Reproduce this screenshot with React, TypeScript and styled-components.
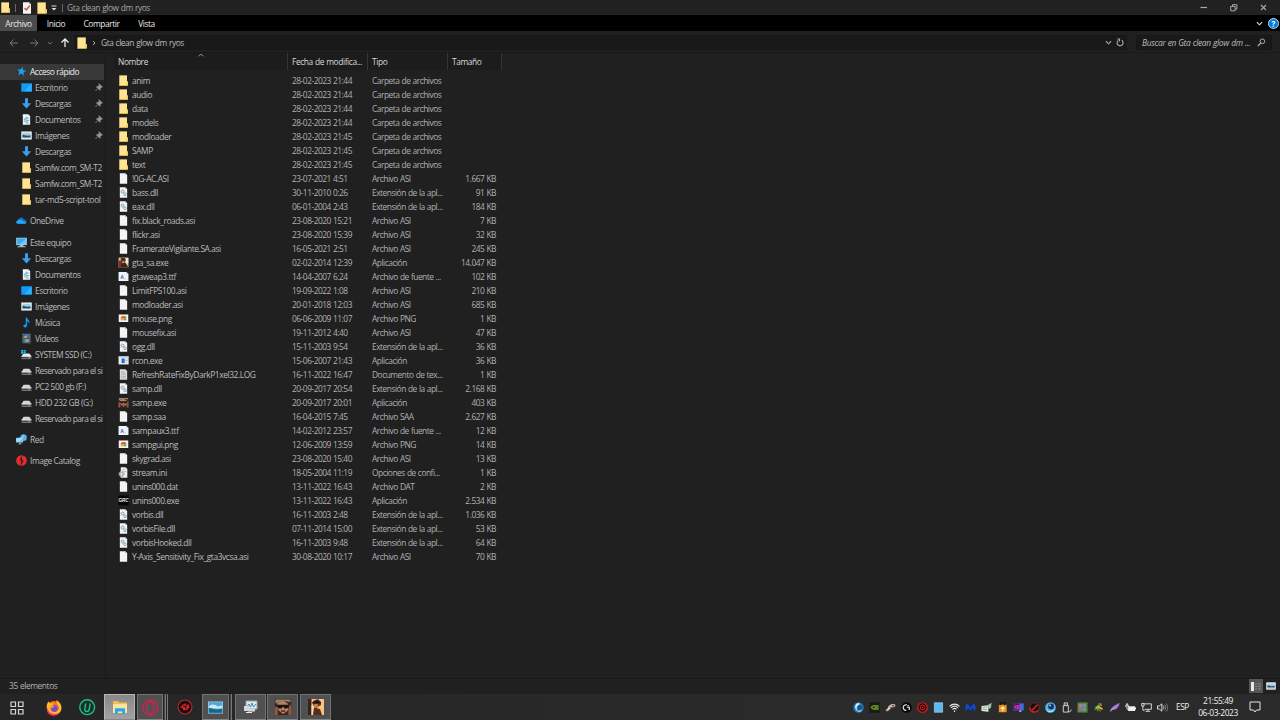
import React from 'react';
import styled, { createGlobalStyle, css } from 'styled-components';

const GlobalStyle = createGlobalStyle`
    * {
        box-sizing: border-box;
    }
    body {
        margin: 0;
        background: #202020;
        overflow: hidden;
    }
    svg {
        display: block;
        flex: none;
    }
`

/**
 * ICONS
 */

type IconName =
    | 'folder' | 'file' | 'dll' | 'font' | 'png' | 'log' | 'ini' | 'app'
    | 'gta' | 'samp' | 'grc' | 'star' | 'desktop' | 'down' | 'doc' | 'picture'
    | 'cloud' | 'pc' | 'music' | 'video' | 'systemDrive' | 'drive' | 'network' | 'catalog';

const IconText = styled('text')`
    font-family: 'Liberation Sans', sans-serif;
    font-weight: 700;
    letter-spacing: 0;
`

const page = (
    <>
        <path d="M2 .3h6l2 2v9.4H2z" fill="#f4f4f4" />
        <path d="M8 .3v2h2z" fill="#a9a9a9" />
    </>
)

const icons: Record<IconName, React.ReactNode> = {
    folder: (
        <>
            <path d="M1.4.4h8.4v11.2H1.4z" fill="#ffe591" />
            <path d="M9.4 7.2h1.5v4.4H1.4v-.7h8z" fill="#e8bd4d" />
            <path d="M9.4 7.2h1.5v4H9.4z" fill="#f8d36a" />
        </>
    ),
    file: page,
    dll: (
        <>
            {page}
            <circle cx="5" cy="5" r="1.7" fill="#dce6ee" stroke="#8b9ba8" strokeWidth="1" />
            <circle cx="7.7" cy="8" r="1.5" fill="#dce6ee" stroke="#8ba5b8" strokeWidth="1" />
        </>
    ),
    font: (
        <>
            <path d="M.6 1h8.6l2.2 2v8H.6z" fill="#f2f4f8" />
            <path d="M9.2 1v2h2.2z" fill="#aaa" />
            <IconText x="2.4" y="9" fontSize="5.6" fill="#2b60c8">A</IconText>
            <path d="M7 9h2" stroke="#b7bec9" strokeWidth=".7" />
        </>
    ),
    png: (
        <>
            <path d="M.8 1.6h10.4v8.2H.8z" fill="#f4f4f4" />
            <path d="M3 5c1-2 4-2 6-1v2H3z" fill="#d9602e" />
            <path d="M3 6h2.5v2H3z" fill="#e6a33e" />
            <path d="M6 6h3v2H6z" fill="#69a34a" />
        </>
    ),
    log: (
        <>
            <path d="M2 .3h6l2 2v9.4H2z" fill="#dcdcdc" />
            <path d="M3.3 3h4M3.3 4.7h5.4M3.3 6.4h5.4M3.3 8.1h5.4M3.3 9.8h5.4" stroke="#999" strokeWidth=".6" />
        </>
    ),
    ini: (
        <>
            <path d="M3 .3h5.2l2 2v9.4H3z" fill="#eee" />
            <path d="M5 3h3M6 5h3" stroke="#aaa" strokeWidth=".7" />
            <circle cx="3.8" cy="7.7" r="2.6" fill="#bcc1c5" stroke="#a2a8ac" strokeWidth="1.4" strokeDasharray="1.2 .7" />
            <circle cx="3.8" cy="7.7" r=".9" fill="#f0f0f0" />
        </>
    ),
    app: (
        <>
            <path d="M.6 1.5h11v8.8h-11z" fill="#eee" />
            <path d="M.6 1.5h11v1.3h-11z" fill="#c5ccd3" />
            <path d="M3.9 3.8h3.4v5H3.9z" fill="#0878d4" />
            <path d="M8.3 4.3h2M8.3 6h2M8.3 7.7h1.3" stroke="#999" strokeWidth=".7" />
        </>
    ),
    gta: (
        <>
            <path d="M.6.6h10.8v10.8H.6z" fill="#d8c4a8" />
            <path d="M.6.6h4.4l1 4-2 6.8H.6z" fill="#713326" />
            <path d="M1 1h2v3H1z" fill="#e0b98c" />
            <path d="M4 1.5 7.4 1l1 2.2-1.2 3-2.5-1z" fill="#32201a" />
            <path d="m5 4 2 .2-.4 2.5-2.2-.2z" fill="#d98c57" />
            <path d="m4 7 4-1 3.4 5.4H3z" fill="#3f231c" />
            <path d="M8.8 1.2h2.4v5.6H8.4z" fill="#f5ead5" />
        </>
    ),
    samp: (
        <>
            <path d="M.5.6h11v10.8H.5z" fill="#3e2620" />
            <path d="M.5 6h2v5.4h-2zM9.6 5h1.9v6.4H9.6z" fill="#8a5a44" />
            <path d="M2 3.5 6 1.7 9.6 4l-.4 4.5L6 10.7 3 8.2z" fill="#b88065" />
            <path d="M2 4.5h8v1.6L8.5 7H7L6 5.7 5 7H3.3l-.9-.9z" fill="#191312" />
            <path d="M4.7 8.2h2.8v1H4.7z" fill="#532720" />
            <path d="M1 1h10v1.6L6 2 1 3.7z" fill="#8b8669" />
        </>
    ),
    grc: (
        <>
            <path d="M.3.6h11.4v10.8H.3z" fill="#050505" />
            <IconText x="6" y="7.9" fontSize="5" fontStyle="italic" textAnchor="middle" fill="#ececec">GRC</IconText>
        </>
    ),
    star: <path d="m7.6.8.5 3.4 3.3.7-3 1.8.4 3.8-2.6-2.5-3.6 1.5 1.5-3.6L1.5 3.6l3.8-.1z" fill="#1ba1f5" transform="translate(-.3 .3)" />,
    desktop: (
        <>
            <path d="M.3 1.4h11.4v9.2H.3z" fill="#139af5" />
            <path d="M11.7 1.4v9.2H3z" fill="#28b2ff" />
            <path d="M.3 9.8h11.4v.8H.3z" fill="#0878bb" />
        </>
    ),
    down: <path d="M4.4.4h3.2v5.4h3.5L6 11.5.9 5.8h3.5z" fill="#3a9ff0" />,
    doc: (
        <>
            {page}
            <path d="M5 3h2v3H5zM3 5h2v2H3z" fill="#73b7de" />
            <path d="M7 4.5h2M5 7h4M3.2 8.5h4.6M5.5 10h3" stroke="#5297be" strokeWidth=".8" />
        </>
    ),
    picture: (
        <>
            <path d="M.3 1.6h11.4v8.8H.3z" fill="#f4f4f4" />
            <path d="M1.7 3h8.6v5.8H1.7z" fill="#a5cce6" />
            <path d="M1.7 5 4 5.8l3 .4 3.3-.6v2H1.7z" fill="#294f56" />
            <path d="M1.7 7.6h8.6v1.2H1.7z" fill="#5f9dca" />
        </>
    ),
    cloud: (
        <>
            <path d="M1 9.2C-.2 7 1 5.7 2.3 5.5 3 2.5 7 1.8 8.4 4.5c1.7 0 3 1.1 3.2 2.5.2 1.6-.8 2.5-2.3 2.5H2z" fill="#1270c4" />
            <path d="m2.3 5.5 3-.4 6 3.5c-.4.6-1 .9-2 .9H2C1 9.5.3 8.6.3 7.6z" fill="#2aa8ed" />
        </>
    ),
    pc: (
        <>
            <path d="M.2.8h11.6v8H.2z" fill="#acd6ee" />
            <path d="M1 1.6h10v6.3H1z" fill="#3baaf0" />
            <path d="M11 1.6v6.3H4z" fill="#6bc9ff" />
            <path d="M4 8.7h4v1.4H4zM1.5 10.2h9v1h-9z" fill="#aab8c1" />
        </>
    ),
    music: <path d="M5.2.6h1.3C7 3 10 3.8 9.5 7.4 8.6 5.6 7.6 5 6.7 5v4.3C6.6 11 5 11.8 3.5 11.2 1.5 10.2 3 8 5.2 8.3z" fill="#0d9bf2" />,
    video: (
        <>
            <path d="M1.2.6h9.6v10.8H1.2z" fill="#4a4a4a" />
            <path d="M2 1.5h1M2 3.5h1M2 5.5h1M2 7.5h1M2 9.5h1M9 1.5h1M9 3.5h1M9 5.5h1M9 7.5h1M9 9.5h1" stroke="#999" strokeWidth=".8" />
            <path d="M3.6 1.3h4.8v4H3.6z" fill="#367ed1" />
            <path d="M3.6 3.5h2.6v2H3.6z" fill="#e2a83a" />
            <path d="M3.6 6.3h4.8v4.2H3.6z" fill="#4b90cf" />
            <path d="M5.6 7.2h2.8v2H5.6z" fill="#d5a745" />
        </>
    ),
    systemDrive: (
        <>
            <path d="M2.8 5h6.4l2.2 3H.6z" fill="#e9e9e9" />
            <path d="M.6 8h10.8v2.8H.6z" fill="#3f4345" />
            <path d="M.6 8h10.8" stroke="#fafafa" strokeWidth="1" />
            <path d="M.6 10.6h10.8" stroke="#999" strokeWidth=".7" />
            <path d="M7.8 9.4h2.4" stroke="#6be083" strokeWidth=".8" />
            <path d="M0 1.2h2.2v1.7H0zM2.7 1h2.5v1.9H2.7zM0 3.4h2.2v1.7H0zM2.7 3.4h2.5v1.9H2.7z" fill="#20b5ed" />
        </>
    ),
    drive: (
        <>
            <path d="M2.8 4h6.4l2.2 3.6H.6z" fill="#d4d5d6" />
            <path d="M.6 7.4h10.8v3.2H.6z" fill="#3f4345" />
            <path d="M.6 7.6h10.8" stroke="#fafafa" strokeWidth="1.1" />
            <path d="M.6 10.3h10.8" stroke="#999" strokeWidth=".7" />
            <path d="M8 9h2" stroke="#8bdb97" strokeWidth=".8" />
        </>
    ),
    network: (
        <>
            <circle cx="8.3" cy="4" r="3.6" fill="#4ca7d6" />
            <path d="M6 2.8c2-.6 3-1 4.8.8M8.3.8C7 3 8 5 9.7 6.4" fill="none" stroke="#a8ddf4" strokeWidth=".7" />
            <path d="m.2 4.3 7.6-.5v5.4L.2 9z" fill="#73c7f6" />
            <path d="M.2 4.3 7.8 3.8 3 9.1.2 9z" fill="#a0dcfa" />
            <path d="M3.5 9.2h1.7v1.4H3.5zM2.3 10.5h4v.8h-4z" fill="#a4b3bd" />
        </>
    ),
    catalog: (
        <>
            <circle cx="6" cy="6" r="5.8" fill="#e52b2b" />
            <path d="M7 .2 3.8 6h2L5 11.8 8.6 5.7H6.3z" fill="#202020" />
        </>
    ),
};

function Icon({name, size = 11}: {name: IconName, size?: number}) {
    return <svg width={size} height={size} viewBox="0 0 12 12">{icons[name]}</svg>
}

const Chevron = ({size = 7, color = '#aaa'}: {size?: number, color?: string}) => (
    <svg width={size} height={size} viewBox="0 0 8 8">
        <path d="m1 2.5 3 3 3-3" fill="none" stroke={color} strokeWidth="1.3" />
    </svg>
)

/**
 * WINDOW
 */

const Window = styled('div')`
    width: 1280px;
    height: 720px;
    display: flex;
    flex-direction: column;
    overflow: hidden;
    background: #202020;
    color: #bcbcbc;
    font-family: 'Open Sans', 'Noto Sans', sans-serif;
    font-size: 8.4px;
    line-height: 14px;
    letter-spacing: -0.48px;
    word-spacing: 0.4px;
    white-space: nowrap;
    cursor: default;
`

const TitleBar = styled('header')`
    height: 15px;
    flex: none;
    display: flex;
    align-items: center;
    background: #212121;
`

const Separator = styled('i')`
    width: 1px;
    height: 8px;
    background: #686868;
`

const QuickAccess = styled('div')`
    width: 67px;
    display: grid;
    grid-template-columns: 15px 6px 15px 15px 11px 5px;
    align-items: center;
`

const Title = styled('span')`
    letter-spacing: -0.43px;
    color: #a5a5a5;
`

const Controls = styled('div')`
    margin-left: auto;
    width: 80px;
    display: flex;
    justify-content: space-between;
    padding-right: 12px;
`

const Tabs = styled('nav')`
    height: 16px;
    flex: none;
    display: flex;
    align-items: center;
    background: #000;
    color: #e8e8e8;
`

const Tab = styled('span')<{$width: number, $selected?: boolean}>`
    width: ${p => p.$width}px;
    height: 16px;
    line-height: 17px;
    text-align: center;
    letter-spacing: -0.4px;
    background: ${p => p.$selected ? '#4b4b4b' : 'transparent'};
`

const TabsFiller = styled('span')`
    flex: 1;
`

const Help = styled('span')`
    width: 11px;
    height: 11px;
    margin: 0 1px 0 5px;
    border: 1px solid #b9d8ef;
    border-radius: 50%;
    background: #0878d7;
    color: #fff;
    font-size: 8px;
    font-weight: 700;
    line-height: 9px;
    letter-spacing: 0;
    text-align: center;
`

const Navigation = styled('div')`
    height: 22px;
    flex: none;
    display: flex;
    padding: 4px 8px 2px 0;
    background: #202020;
    border-bottom: 1px solid #191919;
`

const Arrows = styled('div')`
    width: 74px;
    display: grid;
    grid-template-columns: 20px 18px 13px 10px;
    padding-left: 9px;
    align-items: center;
`

const AddressBar = styled('div')`
    flex: 1;
    display: flex;
    align-items: center;
    gap: 4px;
    margin-right: 9px;
    padding: 0 2px 0 1px;
    background: #191919;
    border: 1px solid #171717;
    letter-spacing: -0.43px;
    & > svg:nth-of-type(3) {
        margin-left: auto;
    }
`

const Search = styled('div')`
    width: 136px;
    display: flex;
    align-items: center;
    justify-content: space-between;
    padding: 0 5px 0 5px;
    background: #191919;
    border: 1px solid #171717;
    font-style: italic;
    letter-spacing: -0.32px;
`

const Body = styled('main')`
    flex: 1;
    min-height: 0;
    display: flex;
`

/**
 * SIDEBAR
 */

const Sidebar = styled('aside')`
    width: 106px;
    flex: none;
    padding: 10.6px 1px 0 0;
    border-right: 1px solid #191919;
`

const Group = styled('section')`
    margin-bottom: 5.35px;
`

const SidebarRow = styled('div')<{$level?: number, $selected?: boolean}>`
    width: 104px;
    height: 16px;
    display: flex;
    align-items: center;
    gap: 3px;
    overflow: hidden;
    padding-left: ${p => p.$level ? 21 : 16}px;
    ${p => p.$selected && css`
        background: #383838;
        color: #eee;
    `}
`

const SidebarLabel = styled('span')<{$tight?: boolean}>`
    flex: 1;
    line-height: 15px;
    letter-spacing: ${p => p.$tight ? -0.55 : -0.43}px;
    word-spacing: 0;
`

const Pin = () => (
    <svg width="10" height="9" viewBox="0 0 10 9">
        <path d="m4.5 1 3.4 3.4-1.1.2-1.3 1.5-.1 1.5L2 4.1l1.5-.2 1.3-1.4zM3.4 5.7 1 8.2" fill="#8e9aa3" stroke="#8e9aa3" strokeWidth=".8" transform="translate(.5 -.3)" />
    </svg>
)

interface Place {
    icon: IconName;
    label: string;
    pinned?: boolean;
    root?: boolean;
    selected?: boolean;
}

const places: Place[][] = [
    [
        { icon: 'star', label: 'Acceso rápido', root: true, selected: true },
        { icon: 'desktop', label: 'Escritorio', pinned: true },
        { icon: 'down', label: 'Descargas', pinned: true },
        { icon: 'doc', label: 'Documentos', pinned: true },
        { icon: 'picture', label: 'Imágenes', pinned: true },
        { icon: 'down', label: 'Descargas' },
        { icon: 'folder', label: 'Samfw.com_SM-T2' },
        { icon: 'folder', label: 'Samfw.com_SM-T2' },
        { icon: 'folder', label: 'tar-md5-script-tool' },
    ],
    [{ icon: 'cloud', label: 'OneDrive', root: true }],
    [
        { icon: 'pc', label: 'Este equipo', root: true },
        { icon: 'down', label: 'Descargas' },
        { icon: 'doc', label: 'Documentos' },
        { icon: 'desktop', label: 'Escritorio' },
        { icon: 'picture', label: 'Imágenes' },
        { icon: 'music', label: 'Música' },
        { icon: 'video', label: 'Vídeos' },
        { icon: 'systemDrive', label: 'SYSTEM SSD (C:)' },
        { icon: 'drive', label: 'Reservado para el si' },
        { icon: 'drive', label: 'PC2 500 gb (F:)' },
        { icon: 'drive', label: 'HDD 232 GB (G:)' },
        { icon: 'drive', label: 'Reservado para el si' },
    ],
    [{ icon: 'network', label: 'Red', root: true }],
    [{ icon: 'catalog', label: 'Image Catalog', root: true }],
];

/**
 * FILE LIST
 */

const FilePane = styled('section')`
    flex: 1;
    padding-left: 8px;
`

const columns = css`
    display: grid;
    grid-template-columns: 174px 80px 80px 54px;
`

const ListHeader = styled('div')`
    ${columns}
    width: 388px;
    height: 17px;
    background: #1c1c1c;
    color: #d8d8d8;
`

const HeaderCell = styled('div')`
    position: relative;
    padding: 0 0 0 4px;
    border-right: 1px solid #343434;
    line-height: 17px;
    letter-spacing: -0.4px;
    & > svg {
        position: absolute;
        top: 0;
        left: 84px;
    }
`

const FileRows = styled('div')`
    padding-top: 3.5px;
`

const FileRow = styled('div')`
    ${columns}
    height: 14px;
    align-items: center;
`

const Cell = styled('span')<{$right?: boolean}>`
    padding: 0 ${p => p.$right ? 6 : 0}px 0 4px;
    text-align: ${p => p.$right ? 'right' : 'left'};
    color: #b0b0b0;
`

const NameCell = styled(Cell)`
    display: flex;
    align-items: center;
    gap: 3px;
    padding-left: 4px;
    color: #bcbcbc;
    letter-spacing: -0.41px;
`

type FileEntry = [IconName, string, string, string, string?];

const files: FileEntry[] = [
    ['folder', 'anim', '28-02-2023 21:44', 'Carpeta de archivos'],
    ['folder', 'audio', '28-02-2023 21:44', 'Carpeta de archivos'],
    ['folder', 'data', '28-02-2023 21:44', 'Carpeta de archivos'],
    ['folder', 'models', '28-02-2023 21:44', 'Carpeta de archivos'],
    ['folder', 'modloader', '28-02-2023 21:45', 'Carpeta de archivos'],
    ['folder', 'SAMP', '28-02-2023 21:45', 'Carpeta de archivos'],
    ['folder', 'text', '28-02-2023 21:45', 'Carpeta de archivos'],
    ['file', '!0G-AC.ASI', '23-07-2021 4:51', 'Archivo ASI', '1.667 KB'],
    ['dll', 'bass.dll', '30-11-2010 0:26', 'Extensión de la apl...', '91 KB'],
    ['dll', 'eax.dll', '06-01-2004 2:43', 'Extensión de la apl...', '184 KB'],
    ['file', 'fix.black_roads.asi', '23-08-2020 15:21', 'Archivo ASI', '7 KB'],
    ['file', 'flickr.asi', '23-08-2020 15:39', 'Archivo ASI', '32 KB'],
    ['file', 'FramerateVigilante.SA.asi', '16-05-2021 2:51', 'Archivo ASI', '245 KB'],
    ['gta', 'gta_sa.exe', '02-02-2014 12:39', 'Aplicación', '14.047 KB'],
    ['font', 'gtaweap3.ttf', '14-04-2007 6:24', 'Archivo de fuente ...', '102 KB'],
    ['file', 'LimitFPS100.asi', '19-09-2022 1:08', 'Archivo ASI', '210 KB'],
    ['file', 'modloader.asi', '20-01-2018 12:03', 'Archivo ASI', '685 KB'],
    ['png', 'mouse.png', '06-06-2009 11:07', 'Archivo PNG', '1 KB'],
    ['file', 'mousefix.asi', '19-11-2012 4:40', 'Archivo ASI', '47 KB'],
    ['dll', 'ogg.dll', '15-11-2003 9:54', 'Extensión de la apl...', '36 KB'],
    ['app', 'rcon.exe', '15-06-2007 21:43', 'Aplicación', '36 KB'],
    ['log', 'RefreshRateFixByDarkP1xel32.LOG', '16-11-2022 16:47', 'Documento de tex...', '1 KB'],
    ['dll', 'samp.dll', '20-09-2017 20:54', 'Extensión de la apl...', '2.168 KB'],
    ['samp', 'samp.exe', '20-09-2017 20:01', 'Aplicación', '403 KB'],
    ['file', 'samp.saa', '16-04-2015 7:45', 'Archivo SAA', '2.627 KB'],
    ['font', 'sampaux3.ttf', '14-02-2012 23:57', 'Archivo de fuente ...', '12 KB'],
    ['png', 'sampgui.png', '12-06-2009 13:59', 'Archivo PNG', '14 KB'],
    ['file', 'skygrad.asi', '23-08-2020 15:40', 'Archivo ASI', '13 KB'],
    ['ini', 'stream.ini', '18-05-2004 11:19', 'Opciones de confi...', '1 KB'],
    ['file', 'unins000.dat', '13-11-2022 16:43', 'Archivo DAT', '2 KB'],
    ['grc', 'unins000.exe', '13-11-2022 16:43', 'Aplicación', '2.534 KB'],
    ['dll', 'vorbis.dll', '16-11-2003 2:48', 'Extensión de la apl...', '1.036 KB'],
    ['dll', 'vorbisFile.dll', '07-11-2014 15:00', 'Extensión de la apl...', '53 KB'],
    ['dll', 'vorbisHooked.dll', '16-11-2003 9:48', 'Extensión de la apl...', '64 KB'],
    ['file', 'Y-Axis_Sensitivity_Fix_gta3vcsa.asi', '30-08-2020 10:17', 'Archivo ASI', '70 KB'],
];

/**
 * STATUS BAR
 */

const StatusBar = styled('footer')`
    height: 16px;
    flex: none;
    display: flex;
    align-items: flex-start;
    padding-left: 9px;
    border-top: 1px solid #191919;
    color: #b0b0b0;
    line-height: 14px;
    letter-spacing: -0.41px;
`

const ViewButtons = styled('div')`
    margin-left: auto;
    width: 31px;
    height: 14px;
    display: flex;
    align-items: center;
    gap: 3px;
`

const ViewButton = styled('span')<{$selected?: boolean}>`
    height: 14px;
    width: ${p => p.$selected ? 14 : 10}px;
    display: flex;
    align-items: center;
    justify-content: center;
    background: ${p => p.$selected ? '#555' : 'transparent'};
`

/**
 * TASKBAR
 */

const Taskbar = styled('footer')`
    height: 26px;
    flex: none;
    display: flex;
    align-items: center;
    background: linear-gradient(90deg, #252525, #2b2b2b 70%, #2a2a2a);
`

const TaskButton = styled('span')<{$width: number, $tone?: 'active' | 'open', $gap?: number}>`
    width: ${p => p.$width}px;
    height: 26px;
    flex: none;
    display: flex;
    align-items: center;
    justify-content: center;
    margin-right: ${p => p.$gap || 0}px;
    ${p => p.$tone && css`
        background: ${p.$tone === 'active' ? 'linear-gradient(#888, #a2a2a2)' : '#505050'};
        border: 1px solid ${p.$tone === 'active' ? '#b6b6b6' : '#727272'};
        border-bottom-color: #858585;
    `}
`

const Stack = styled('span')<{$width: number, $gap?: number}>`
    width: ${p => p.$width}px;
    height: 26px;
    margin-right: ${p => p.$gap || 0}px;
    background: #464646;
    border-left: 1px solid #252525;
    border-right: 1px solid #777;
`

const Tray = styled('div')`
    margin-left: auto;
    width: 430px;
    height: 26px;
    display: flex;
    align-items: center;
`

const TrayItem = styled('span')`
    width: 16px;
    display: flex;
    justify-content: center;
`

const Language = styled('span')`
    width: 24px;
    padding-left: 6px;
    color: #eee;
`

const Clock = styled('div')`
    width: 48px;
    text-align: center;
    color: #f1f1f1;
    line-height: 12px;
    letter-spacing: -0.42px;
`

const Notifications = styled('span')`
    width: 25px;
    display: flex;
    justify-content: center;
`

const trayIcons: React.ReactNode[] = [
    <><circle cx="6" cy="6" r="5.7" fill="#2379b8" /><path d="M7 1.2C1.5.5.5 8.8 5.7 9.9 2.9 8 3.7 3.5 7 3z" fill="#d9edf6" /><circle cx="7.7" cy="6.2" r="2.7" fill="#165389" /><path d="M4 9c2 1 4 .8 6-1-1 3-4 4-6 1z" fill="#a5d4ec" /></>,
    <><path d="M.3.3h11.4v11.4H.3z" fill="#171b15" /><path d="M1.5 6C3 3.4 6 2.5 8.5 5.8 6 9 3 8.4 1.5 6zM4.5 3.2h6v5.6h-6z" fill="#6b9a20" opacity=".8" /><circle cx="5.2" cy="5.9" r="1.7" fill="#1e2919" stroke="#90c33b" strokeWidth=".7" /></>,
    <><path d="M1.5 10.2c-1.5-1-.3-2.5 1.5-3.5C3.2 3.5 7 1.5 10 2.2c2 .5 1.6 2.8 0 3.6L6.2 6 3.7 9.7z" fill="#b8b4aa" /><circle cx="8.9" cy="4.1" r="1" fill="#8c3431" /><path d="m3 7 3 .5" stroke="#eee" strokeWidth="1" /></>,
    <><circle cx="6" cy="6" r="5.8" fill="#080808" /><path d="M6.4 3.2a3 3 0 1 0-.6 5.8M6.3 5.7h2.7v3M7 3.8l1.8.3" fill="none" stroke="#eee" strokeWidth="1.3" /></>,
    <><circle cx="6" cy="6" r="5.2" fill="#150608" stroke="#e71b23" strokeWidth="1.3" /><path d="m6 3.2 2.4 1.4v2.8L6 8.8 3.6 7.4V4.6z" fill="none" stroke="#d81a22" strokeWidth="1.1" /><circle cx="6" cy="6" r=".9" fill="#d82228" /></>,
    <path d="M1.5.8h9v10.4h-9z" fill="#58b9f5" stroke="#bce4ff" strokeWidth=".6" />,
    <path d="M.7 4.7c3-3.2 7.6-3.2 10.6 0M2.2 6.4c2.3-2.2 5.3-2.2 7.6 0M3.8 8.1c1.3-1.2 3.1-1.2 4.4 0M6 9.4v1.4" fill="none" stroke="#e9e9e9" strokeWidth="1.3" />,
    <path d="M1.2 10.2C-.2 6.5.6 3.4 2.2 1.2L6 6.4l3.8-5.2c1.6 2.2 2.4 5.3 1 9L8.5 6.6 6 9.6 3.5 6.6z" fill="#0c45db" />,
    <><path d="m.5 4.3 7.6-.8v7.2L.5 9.7z" fill="#e8eee9" /><path d="m1.5 6 5.5-.6M1.5 8l5.5.3" stroke="#6fa37b" strokeWidth=".9" /><path d="M7 3.5 11.5.8 11 5.6 8.7 8z" fill="#9ac3a6" /></>,
    <><path d="M2 3h8.5v8.2H2z" fill="#f0921f" /><path d="M3.5 3.5V.8h5V3.5" fill="none" stroke="#111" strokeWidth="1.3" /><path d="M6.3 10V5.5m-2 2 2-2 2 2" fill="none" stroke="#fff3ca" strokeWidth="1.2" /></>,
    <><path d="M.3 1.5h11.4v7.7H.3z" fill="#4964df" /><path d="M.3 1.5H7v6.8H.3z" fill="#50125b" /><IconText x=".8" y="7.4" fontSize="5.5" fill="#ed3ec5">48</IconText><path d="M7 9h2v2H7z" fill="#b8b8d9" /></>,
    <><circle cx="6" cy="6" r="5.2" fill="#171111" stroke="#8a2426" strokeWidth="1" /><path d="m2.5 10 6.8-7" stroke="#c82629" strokeWidth="1.7" /><path d="M1 6c0 5 5.6 6.4 9 3" fill="none" stroke="#ce1e20" strokeWidth="1.6" /></>,
    <><circle cx="6" cy="6" r="5.8" fill="#55b7e8" /><circle cx="6.6" cy="4.9" r="3.2" fill="#183365" /><circle cx="5.5" cy="3.7" r="1" fill="#b4e7fc" /><path d="M1 7c2 4 6 4 9 1-1.5 4-7.4 5-9-1z" fill="#b9eafa" /></>,
    <path d="M2.5 4H8v7H2.5zM3.5 4V1H7v3M4.5 2.5H5M5.8 2.5h.4M8.2 10.6c2 .3 2.8-.6 2.8-2.4" fill="none" stroke="#ddd" strokeWidth="1" />,
    <><path d="M.6.6h10.8v10.8H.6z" fill="#527b38" /><path d="M2 2h4v4H2z" fill="#a5837e" /><path d="M6 2h4v4H6z" fill="#788ca2" /><path d="M2 6h4v4H2z" fill="#9b719b" /><path d="M6 6h4v4H6z" fill="#61969a" /><path d="M1 1h10v10H1z" fill="none" stroke="#6aa441" strokeWidth=".8" strokeDasharray="1 1" /></>,
    <><path d="m4 4 5-3 1 3-3 1.5L5.5 11 4 8 1 9z" fill="#49a837" /><path d="M6 1h2v3H6z" fill="#e33e23" /><path d="m5 4 6 3-1 1.4-5-2.4z" fill="#edc735" /><path d="m7 7 2 2-1 2-2-3z" fill="#d8402a" /><path d="m2 5 3 1-1 2z" fill="#65c9cc" /></>,
    <><path d="M.8 11C2 5 6 4 11.4.8c0 4.4-3 8-8.2 7.9z" fill="#a178cf" /><path d="m1.5 10 6-5" stroke="#d0acf1" strokeWidth=".7" /></>,
    <><path d="M3.4 4.5H11v5.2H3.4zM11 6h1v2.2h-1z" fill="#efefef" /><path d="M1 2.5h2v2M2.3 1v2M.7 3.5h3v1.8h-3zM2.2 5.5V8H4" fill="none" stroke="#ddd" strokeWidth=".9" /></>,
    <path d="M3 2h8.3v6H4M5 10.2h5M7.5 8v2M.8 1.5h2.5v3H.8zM2 4.5V9h2" fill="none" stroke="#e1e1e1" strokeWidth="1" />,
    <><path d="M.6 4.3h2L5.3 2v8L2.6 7.7h-2z" fill="none" stroke="#eee" strokeWidth="1" /><path d="M6.7 4c1 1 1 3 0 4" fill="none" stroke="#eee" strokeWidth=".9" /><path d="M8.3 2.8c1.7 1.7 1.7 4.7 0 6.4M10 1.7c2.2 2.5 2.2 6.1 0 8.6" fill="none" stroke="#999" strokeWidth=".8" /></>,
];

function Explorer() {
    return (
        <>
            <TitleBar>
                <QuickAccess>
                    <Icon name="folder" />
                    <Separator />
                    <svg width="12" height="12" viewBox="0 0 12 12">
                        {page}
                        <path d="m3.6 6 1.7 2L8.7 3.8" fill="none" stroke="#c95535" strokeWidth="1.4" />
                    </svg>
                    <Icon name="folder" size={12} />
                    <svg width="8" height="8" viewBox="0 0 8 8">
                        <path d="M.5 2h5" stroke="#ddd" /><path d="M.5 4h5L3 6.5z" fill="#ddd" />
                    </svg>
                    <Separator />
                </QuickAccess>
                <Title>Gta clean glow dm ryos</Title>
                <Controls>
                    <svg width="8" height="8" viewBox="0 0 8 8"><path d="M.5 3.5h6.5" stroke="#aaa" strokeWidth="1.2" /></svg>
                    <svg width="8" height="8" viewBox="0 0 8 8"><path d="M.7 2.4h4.4v4.4H.7zM2.5 2.4V.7h4.4v4.4H5.2" fill="none" stroke="#aaa" /></svg>
                    <svg width="8" height="8" viewBox="0 0 8 8"><path d="m1 1 5 5m0-5-5 5" stroke="#aaa" strokeWidth="1.1" /></svg>
                </Controls>
            </TitleBar>
            <Tabs>
                <Tab $width={37} $selected>Archivo</Tab>
                <Tab $width={38}>Inicio</Tab>
                <Tab $width={53}>Compartir</Tab>
                <Tab $width={37}>Vista</Tab>
                <TabsFiller />
                <Chevron color="#ddd" />
                <Help>?</Help>
            </Tabs>
            <Navigation>
                <Arrows>
                    <svg width="10" height="10" viewBox="0 0 10 10"><path d="M9 5H1m3.5-3.5L1 5l3.5 3.5" fill="none" stroke="#777" /></svg>
                    <svg width="10" height="10" viewBox="0 0 10 10"><path d="M1 5h8M5.5 1.5 9 5 5.5 8.5" fill="none" stroke="#777" /></svg>
                    <Chevron size={6} color="#777" />
                    <svg width="10" height="10" viewBox="0 0 10 10"><path d="M5 9V1M1.5 4.5 5 1l3.5 3.5" fill="none" stroke="#eee" strokeWidth="1.3" /></svg>
                </Arrows>
                <AddressBar>
                    <Icon name="folder" size={12} />
                    <svg width="5" height="8" viewBox="0 0 5 8"><path d="m1 2 2 2-2 2" fill="none" stroke="#aaa" /></svg>
                    <span>Gta clean glow dm ryos</span>
                    <Chevron />
                    <svg width="8" height="9" viewBox="0 0 8 9"><path d="M2.2 2.5a3 3 0 1 0 3.5-.2M1.2 1h2.3v2.5" fill="none" stroke="#aaa" strokeWidth="1.1" /></svg>
                </AddressBar>
                <Search>
                    Buscar en Gta clean glow dm ...
                    <svg width="9" height="9" viewBox="0 0 9 9"><circle cx="5.4" cy="3.3" r="2.3" fill="none" stroke="#aaa" /><path d="m3.8 5-3 3" stroke="#aaa" strokeWidth="1.2" /></svg>
                </Search>
            </Navigation>
            <Body>
                <Sidebar>
                    {places.map((group, i) => (
                        <Group key={i}>
                            {group.map((place, j) => (
                                <SidebarRow key={j} $level={place.root ? 0 : 1} $selected={place.selected}>
                                    <Icon name={place.icon} />
                                    <SidebarLabel $tight={place.label.length > 19}>{place.label}</SidebarLabel>
                                    {place.pinned && <Pin />}
                                </SidebarRow>
                            ))}
                        </Group>
                    ))}
                </Sidebar>
                <FilePane>
                    <ListHeader>
                        <HeaderCell>
                            Nombre
                            <svg width="6" height="4" viewBox="0 0 6 4"><path d="m.5 3.2 2.5-2 2.5 2" fill="none" stroke="#888" /></svg>
                        </HeaderCell>
                        <HeaderCell>Fecha de modifica...</HeaderCell>
                        <HeaderCell>Tipo</HeaderCell>
                        <HeaderCell>Tamaño</HeaderCell>
                    </ListHeader>
                    <FileRows>
                        {files.map(([icon, name, date, type, size]) => (
                            <FileRow key={name}>
                                <NameCell><Icon name={icon} />{name}</NameCell>
                                <Cell>{date}</Cell>
                                <Cell>{type}</Cell>
                                <Cell $right>{size}</Cell>
                            </FileRow>
                        ))}
                    </FileRows>
                </FilePane>
            </Body>
            <StatusBar>
                35 elementos
                <ViewButtons>
                    <ViewButton $selected>
                        <svg width="10" height="9" viewBox="0 0 10 9"><path d="M0 0h3v9H0z" fill="#e8e8e8" /><path d="M4 2h2M7 2h3M4 4.5h2M7 4.5h3M4 7h2M7 7h3" stroke="#8b8b8b" /></svg>
                    </ViewButton>
                    <ViewButton><Icon name="picture" size={10} /></ViewButton>
                </ViewButtons>
            </StatusBar>
        </>
    )
}

function DesktopTaskbar() {
    return (
        <Taskbar>
            <TaskButton $width={34} $gap={4}>
                <svg width="14" height="16" viewBox="0 0 14 16"><path d="M1 3h4.5v4.5H1zM8.5 3H13v4.5H8.5zM1 10.5h4.5V15H1zM8.5 10.5H13V15H8.5z" fill="none" stroke="#d8d8d8" strokeWidth="1.2" /></svg>
            </TaskButton>
            <TaskButton $width={32}>
                <svg width="16" height="17" viewBox="0 0 16 17">
                    <circle cx="8" cy="9.3" r="7.2" fill="#ff6a29" />
                    <path d="M.8 8C.5 5 2 3 2.5 2.2L4 4.6c1-.2 3-.6 4 .2l-2 2C2.5 8 4 13 8.5 13 11 13 13 11.3 13 9c0-3-3-3.4-2.5-8 4 2.5 5.5 6 4.7 9.6C14 17 2 17.2.8 9z" fill="#ffbc24" />
                    <path d="M1 8c1 7 9 9 12.5 5-2 4.5-11 5.3-12.5-1z" fill="#ff2f69" />
                    <circle cx="8.3" cy="9.6" r="3.3" fill="#7448da" />
                    <path d="M4 7c1.5-1 3 0 4.5.2C7 9 5.7 8 5.2 10z" fill="#ff9a29" />
                </svg>
            </TaskButton>
            <TaskButton $width={34}>
                <svg width="17" height="17" viewBox="0 0 17 17"><circle cx="8.2" cy="8.2" r="7.4" fill="#202c29" stroke="#16c584" strokeWidth="1.4" /><path d="M6.7 4.5 5.8 10c-.4 3 3.6 3.5 4.4.5l1-6" fill="none" stroke="#17c987" strokeWidth="1.4" /></svg>
            </TaskButton>
            <TaskButton $width={31} $tone="active" $gap={2}>
                <svg width="16" height="15" viewBox="0 0 16 15"><path d="M1 1h5l1.3 1.5H15V13H1z" fill="#f1bf4a" /><path d="M1 4h14v9H1z" fill="#ffe39a" /><path d="M3 8.2h10V14h-2.7v-2.6H5.8V14H3z" fill="#2ba6ed" /></svg>
            </TaskButton>
            <TaskButton $width={26} $tone="open">
                <svg width="17" height="17" viewBox="0 0 17 17"><circle cx="8.5" cy="8.5" r="7.5" fill="none" stroke="#de1f4e" strokeWidth="1.2" /><ellipse cx="8.5" cy="8.5" rx="3.6" ry="6.2" fill="none" stroke="#de1f4e" strokeWidth="1.2" /></svg>
            </TaskButton>
            <Stack $width={3} /><Stack $width={2} />
            <TaskButton $width={34}>
                <svg width="16" height="16" viewBox="0 0 16 16"><circle cx="8" cy="8" r="7" fill="#111" stroke="#c72731" strokeWidth="1.1" /><path d="M3 8.2 5 7l.5-2L7 6l1-2 1.7 2.2L12 5l-.3 2.5L13 8l-2 1.4-.6 2-1.9-1L6.8 12l-1-2.5z" fill="#e1222e" /><path d="M6 7.5h3M9 6v4" stroke="#251013" /></svg>
            </TaskButton>
            <TaskButton $width={27} $tone="open">
                <svg width="15" height="13" viewBox="0 0 15 13"><path d="M0 .5h15v12H0z" fill="#a9d3ea" /><path d="M.7 1.2h13.6v10.6H.7z" fill="#4aa7dc" /><path d="M1 5.5c3-3 6-2 9 0l4-1v3H1z" fill="#cfe9f4" /><path d="M.7 7c4-.4 6 3 13.6.4v4.4H.7z" fill="#17678a" /></svg>
            </TaskButton>
            <Stack $width={3} $gap={3} />
            <TaskButton $width={31} $tone="open" $gap={1}>
                <svg width="15" height="14" viewBox="0 0 15 14"><path d="M3 1h11v8H3z" fill="#dce8ef" stroke="#9aa4aa" /><path d="m4 7 2-3 1.5 3L9 3l1.5 4 2.5-3" fill="none" stroke="#408bb9" /><path d="M1 6h5v5H1zM5 9h7v2.5H5z" fill="#d4d9dc" /><path d="M3 12.5h6" stroke="#eee" /></svg>
            </TaskButton>
            <TaskButton $width={31} $tone="open" $gap={2}><Icon name="samp" size={18} /></TaskButton>
            <TaskButton $width={31} $tone="open">
                <svg width="16" height="16" viewBox="0 0 16 16"><path d="M0 0h16v16H0z" fill="#f4c484" /><path d="M0 0h3.5v16H0z" fill="#35231f" /><path d="M3.5 6h3l-1 10h-2z" fill="#f2d7a8" /><path d="m5 2 5-2 3 3v3L8 9 5 6z" fill="#6f351e" /><path d="M4 3.5 9 1l4 2.5v1H4z" fill="#221915" /><path d="m6 5 4 .2-.3 3L6.5 8z" fill="#cd824e" /><path d="m6 8.5 6 1.5 2 6H5z" fill="#5a2c1c" /></svg>
            </TaskButton>
            <Tray>
                {trayIcons.map((icon, i) => (
                    <TrayItem key={i}><svg width="11" height="11" viewBox="0 0 12 12">{icon}</svg></TrayItem>
                ))}
                <Language>ESP</Language>
                <Clock>21:55:49<br />06-03-2023</Clock>
                <Notifications>
                    <svg width="12" height="12" viewBox="0 0 12 12"><path d="M1 1h10v8H7.5L6 11 4.5 9H1z" fill="none" stroke="#e6e6e6" /></svg>
                </Notifications>
            </Tray>
        </Taskbar>
    )
}

function App() {
    return (
        <Window>
            <GlobalStyle />
            <Explorer />
            <DesktopTaskbar />
        </Window>
    )
}

export default App;
